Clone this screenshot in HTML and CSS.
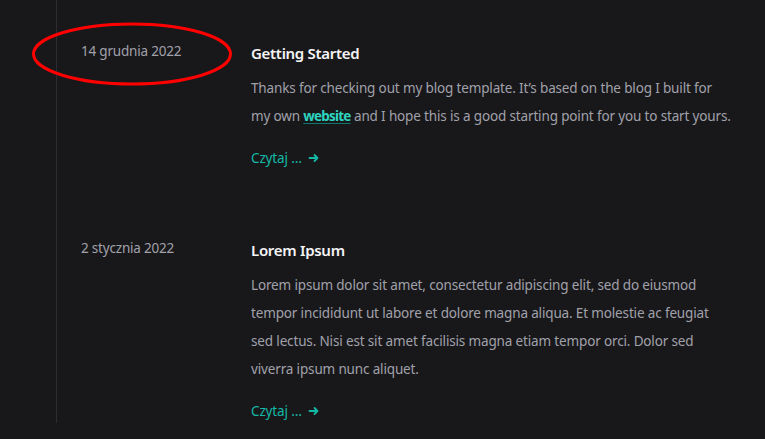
FILE: index.html
```html
<!DOCTYPE html>
<html lang="pl">
<head>
<meta charset="utf-8">
<title>Blog</title>
<link rel="stylesheet" href="styles.css">
</head>
<body>
<main class="page">
  <div class="timeline">
    <article class="post">
      <time class="post-date">14 grudnia 2022</time>
      <div class="post-body">
        <h2 class="post-title">Getting Started</h2>
        <p class="post-text">Thanks for checking out my blog template. It’s based on the blog I built for my own <a class="inline-link" href="#">website</a> and I hope this is a good starting point for you to start yours.</p>
        <a class="read-more" href="#">Czytaj … <svg class="arrow" viewBox="0 0 12 12" width="12" height="12"><path d="M1.5 6h8M6.5 3l3 3-3 3" fill="none" stroke="currentColor" stroke-width="1.8" stroke-linecap="round" stroke-linejoin="round"/></svg></a>
      </div>
    </article>
    <article class="post">
      <time class="post-date">2 stycznia 2022</time>
      <div class="post-body">
        <h2 class="post-title">Lorem Ipsum</h2>
        <p class="post-text">Lorem ipsum dolor sit amet, consectetur adipiscing elit, sed do eiusmod tempor incididunt ut labore et dolore magna aliqua. Et molestie ac feugiat sed lectus. Nisi est sit amet facilisis magna etiam tempor orci. Dolor sed viverra ipsum nunc aliquet.</p>
        <a class="read-more" href="#">Czytaj … <svg class="arrow" viewBox="0 0 12 12" width="12" height="12"><path d="M1.5 6h8M6.5 3l3 3-3 3" fill="none" stroke="currentColor" stroke-width="1.8" stroke-linecap="round" stroke-linejoin="round"/></svg></a>
      </div>
    </article>
  </div>
  <svg class="annotation" width="210" height="72" viewBox="0 0 210 72"><ellipse cx="105" cy="36" rx="98.5" ry="30" fill="none" stroke="#ff0000" stroke-width="3"/></svg>
</main>
</body>
</html>
```

FILE: styles.css
```css
html, body {
  margin: 0;
  padding: 0;
  background: #18181b;
}
body {
  font-family: "Noto Sans", "Open Sans", sans-serif;
  color: #a1a1aa;
  -webkit-font-smoothing: antialiased;
}
.page {
  position: relative;
  height: 439px;
  overflow: hidden;
}
.timeline {
  margin-left: 56px;
  border-left: 1px solid #2c2c31;
  padding: 40px 0 2px 24px;
  display: flex;
  flex-direction: column;
  gap: 69px;
}
.post {
  display: grid;
  grid-template-columns: 170px 482px;
}
.post-date {
  margin-top: 1px;
  font-size: 13.5px;
  line-height: 20px;
  letter-spacing: -0.2px;
  color: #a1a1aa;
}
.post-body {
  display: flex;
  flex-direction: column;
  align-items: flex-start;
}
.post-title {
  margin: 1px 0 0;
  font-size: 15px;
  line-height: 24px;
  font-weight: 600;
  letter-spacing: -0.3px;
  color: #f4f4f5;
}
.post-text {
  margin: 9px 0 0;
  font-size: 13.5px;
  line-height: 28px;
  letter-spacing: -0.15px;
  color: #a1a1aa;
}
.inline-link {
  color: #2dd4bf;
  font-weight: 700;
  letter-spacing: -0.8px;
  text-decoration: underline;
  text-decoration-color: #0f766e;
  text-underline-offset: 2px;
}
.read-more {
  margin-top: 18px;
  font-size: 13.5px;
  line-height: 20px;
  letter-spacing: -0.15px;
  color: #14b8a6;
  text-decoration: none;
  display: inline-flex;
  align-items: center;
  gap: 6px;
}
.arrow {
  display: block;
}
.annotation {
  position: absolute;
  left: 27px;
  top: 18px;
}
```
